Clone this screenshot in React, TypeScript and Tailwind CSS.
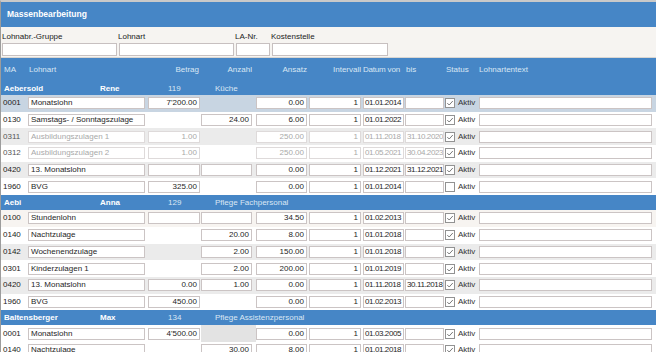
import React from "react";

type Row = {
  code: string;
  la: string;
  betrag: string | null;
  anzahl: string | null;
  ansatz: string;
  intervall: string;
  von: string;
  bis: string;
  aktiv: boolean;
  off?: boolean;
  bg: string;
  anzahlGray?: boolean;
};

type Group = { name: string; first: string; nr: string; ks: string; rows: Row[] };

const W = "bg-white";
const G = "bg-[#ebebeb]";

const groups: Group[] = [
  {
    name: "Aebersold",
    first: "Rene",
    nr: "119",
    ks: "Küche",
    rows: [
      { code: "0001", la: "Monatslohn", betrag: "7'200.00", anzahl: null, ansatz: "0.00", intervall: "1", von: "01.01.2014", bis: "", aktiv: true, bg: "bg-[#c8d5e2]" },
      { code: "0130", la: "Samstags- / Sonntagszulage", betrag: null, anzahl: "24.00", ansatz: "6.00", intervall: "1", von: "01.01.2022", bis: "", aktiv: true, bg: W },
      { code: "0311", la: "Ausbildungszulagen 1", betrag: "1.00", anzahl: null, ansatz: "250.00", intervall: "1", von: "01.11.2018", bis: "31.10.2020", aktiv: true, off: true, bg: G },
      { code: "0312", la: "Ausbildungszulagen 2", betrag: "1.00", anzahl: null, ansatz: "250.00", intervall: "1", von: "01.05.2021", bis: "30.04.2023", aktiv: true, off: true, bg: W },
      { code: "0420", la: "13. Monatslohn", betrag: "", anzahl: "", ansatz: "0.00", intervall: "1", von: "01.12.2021", bis: "31.12.2021", aktiv: true, bg: G },
      { code: "1960", la: "BVG", betrag: "325.00", anzahl: null, ansatz: "0.00", intervall: "1", von: "01.01.2014", bis: "", aktiv: false, bg: W },
    ],
  },
  {
    name: "Aebi",
    first: "Anna",
    nr: "129",
    ks: "Pflege Fachpersonal",
    rows: [
      { code: "0100", la: "Stundenlohn", betrag: "", anzahl: "", ansatz: "34.50", intervall: "1", von: "01.02.2013", bis: "", aktiv: true, bg: "bg-[#f7f4f1]" },
      { code: "0140", la: "Nachtzulage", betrag: null, anzahl: "20.00", ansatz: "8.00", intervall: "1", von: "01.01.2018", bis: "", aktiv: true, bg: W },
      { code: "0142", la: "Wochenendzulage", betrag: null, anzahl: "2.00", ansatz: "150.00", intervall: "1", von: "01.01.2018", bis: "", aktiv: true, bg: G },
      { code: "0301", la: "Kinderzulagen 1", betrag: null, anzahl: "2.00", ansatz: "200.00", intervall: "1", von: "01.01.2019", bis: "", aktiv: true, bg: W },
      { code: "0420", la: "13. Monatslohn", betrag: "0.00", anzahl: "1.00", ansatz: "0.00", intervall: "1", von: "01.11.2018", bis: "30.11.2018", aktiv: true, bg: G },
      { code: "1960", la: "BVG", betrag: "450.00", anzahl: null, ansatz: "0.00", intervall: "1", von: "01.02.2013", bis: "", aktiv: true, bg: W },
    ],
  },
  {
    name: "Baltensberger",
    first: "Max",
    nr: "134",
    ks: "Pflege Assistenzpersonal",
    rows: [
      { code: "0001", la: "Monatslohn", betrag: "4'500.00", anzahl: null, ansatz: "0.00", intervall: "1", von: "01.03.2005", bis: "", aktiv: true, bg: W, anzahlGray: true },
      { code: "0140", la: "Nachtzulage", betrag: null, anzahl: "30.00", ansatz: "8.00", intervall: "1", von: "01.01.2018", bis: "", aktiv: true, bg: W },
    ],
  },
];

function Field({
  value,
  right,
  off,
  tight,
  className,
}: {
  value: string | null;
  right?: boolean;
  off?: boolean;
  tight?: boolean;
  className: string;
}) {
  if (value === null) return <div className={className} />;
  return (
    <div className={className}>
      <div
        className={`h-[12px] flex items-center border bg-white leading-none whitespace-nowrap overflow-hidden ${
          right ? "justify-end" : ""
        } ${tight ? "px-[1px] tracking-[-0.4px]" : "px-[2px]"} ${
          off ? "border-[#dedada] text-[#a9a9a9]" : "border-[#cbc4c4] text-[#1e1e1e]"
        }`}
      >
        {value}
      </div>
    </div>
  );
}

function Check({ on }: { on: boolean }) {
  return (
    <svg width="10" height="10" viewBox="0 0 10 10" className="shrink-0">
      <rect x="0.5" y="0.5" width="9" height="9" fill="white" stroke="#929292" />
      {on && <path d="M2.3 5.1 L4.2 7 L7.8 3" fill="none" stroke="#6a6a6a" strokeWidth="0.9" />}
    </svg>
  );
}

function DataRow({ r }: { r: Row }) {
  return (
    <div className={`h-[16.7px] flex items-center ${r.bg}`}>
      <div className={`w-[27px] pl-[2px] ${r.off ? "text-[#555]" : "text-[#222]"}`}>{r.code}</div>
      <Field value={r.la} off={r.off} className="w-[120px] pr-[3px]" />
      <Field value={r.betrag} right off={r.off} className="w-[53px] pr-[1px]" />
      {r.anzahlGray ? (
        <div className="w-[55px] h-full bg-[#e3e3e3]" />
      ) : (
        <Field value={r.anzahl} right off={r.off} className="w-[55px] pr-[4px]" />
      )}
      <Field value={r.ansatz} right off={r.off} className="w-[53px] pr-[2px]" />
      <Field value={r.intervall} right off={r.off} className="w-[54px] pr-[2px]" />
      <Field value={r.von} off={r.off} tight className="w-[42px] pr-[1px]" />
      <Field value={r.bis} off={r.off} tight className="w-[40px] pr-[1px]" />
      <div className="w-[34px] flex items-center gap-[3px] text-[#333]">
        <Check on={r.aktiv} />
        <span>Aktiv</span>
      </div>
      <Field value="" className="w-[173px]" />
    </div>
  );
}

function GroupRow({ g, h }: { g: Group; h: string }) {
  return (
    <div className={`${h} flex items-center bg-[#4686c6] text-white`}>
      <div className="w-[99px] pl-[3px] font-bold">{g.name}</div>
      <div className="w-[68px] font-bold">{g.first}</div>
      <div className="w-[47px] text-[#dbe7f4]">{g.nr}</div>
      <div className="text-[#dbe7f4]">{g.ks}</div>
    </div>
  );
}

export default function App() {
  return (
    <div className="w-[656px] h-[352px] overflow-hidden bg-white border-l border-t-2 border-l-[#9c9c9c] border-t-[#c9c9c9] text-[8px] font-['Liberation_Sans',Arial,sans-serif]">
      <div className="h-[25px] bg-[#4686c6] flex items-center pl-[6px] text-white font-bold text-[8.5px]">
        Massenbearbeitung
      </div>

      <div className="h-[31px] bg-[#f6f4f1] border-b border-[#d9d6d2] text-[#222]">
        <div className="flex pt-[4px] h-[15px] items-center">
          <div className="w-[117px] pl-[1px]">Lohnabr.-Gruppe</div>
          <div className="w-[117px]">Lohnart</div>
          <div className="w-[36px]">LA-Nr.</div>
          <div>Kostenstelle</div>
        </div>
        <div className="flex mt-[1px] gap-[2px] pl-[1px]">
          <div className="w-[115px] h-[13px] bg-white border border-[#c7c0c0]" />
          <div className="w-[115px] h-[13px] bg-white border border-[#c7c0c0]" />
          <div className="w-[34px] h-[13px] bg-white border border-[#c7c0c0]" />
          <div className="w-[116px] h-[13px] bg-white border border-[#c7c0c0]" />
        </div>
      </div>

      <div className="h-[24px] bg-[#4686c6] flex items-center text-[#d9e6f4]">
        <div className="w-[27px] pl-[3px]">MA</div>
        <div className="w-[120px] pl-[1px]">Lohnart</div>
        <div className="w-[53px] pr-[2px] text-right">Betrag</div>
        <div className="w-[55px] pr-[4px] text-right">Anzahl</div>
        <div className="w-[53px] pr-[2px] text-right">Ansatz</div>
        <div className="w-[54px] pr-[2px] text-right">Intervall</div>
        <div className="w-[42px] tracking-[-0.2px]">Datum von</div>
        <div className="w-[41px] pl-[1px]">bis</div>
        <div className="w-[33px]">Status</div>
        <div>Lohnartentext</div>
      </div>

      {groups.map((g, i) => (
        <div key={g.name}>
          <GroupRow g={g} h={i === 0 ? "h-[13px]" : "h-[15px]"} />
          {g.rows.map((r) => (
            <DataRow key={g.name + r.code} r={r} />
          ))}
        </div>
      ))}
    </div>
  );
}
